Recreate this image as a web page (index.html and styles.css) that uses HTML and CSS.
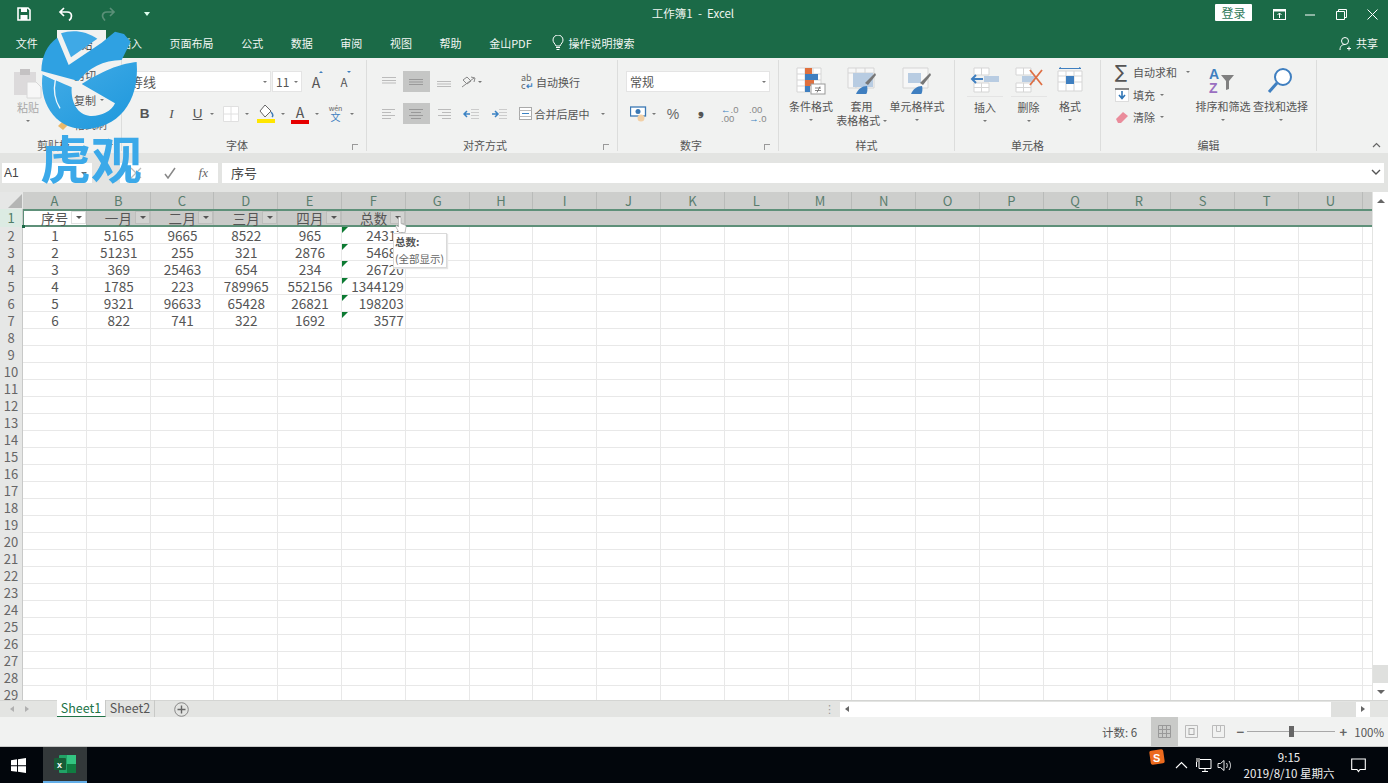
FILE: index.html
```html
<!DOCTYPE html>
<html lang="zh">
<head>
<meta charset="utf-8">
<title>工作簿1 - Excel</title>
<link rel="stylesheet" href="styles.css">
</head>
<body>
<div class="app">
  <header class="titlebar">
    <div class="qat">
      <span class="qbtn"><svg width="14" height="14" viewBox="0 0 14 14"><path d="M1 1h10l2 2v10H1z" fill="none" stroke="#fff" stroke-width="1.6"/><rect x="4" y="1" width="6" height="4" fill="#fff"/><rect x="3.5" y="8" width="7" height="5" fill="#fff"/></svg></span>
      <span class="qbtn"><svg width="16" height="14" viewBox="0 0 16 14"><path d="M6 1L2 5l4 4M2 5h7c3 0 4.500 2 4.500 4s-1 3.500-2.500 4.500" fill="none" stroke="#fff" stroke-width="1.700"/></svg></span>
      <span class="qbtn"><svg width="16" height="14" viewBox="0 0 16 14"><path d="M10 1l4 4-4 4M14 5H7C4 5 2.500 7 2.500 9S3.500 12 5 13.500" fill="none" stroke="#5b9078" stroke-width="1.700"/></svg></span>
      <span class="qbtn"><i class="tri-white"></i></span>
    </div>
    <div class="doc-title">工作簿1&nbsp; - &nbsp;Excel</div>
    <div class="winctl">
      <span class="login">登录</span>
      <span class="wbtn"><svg width="13" height="11" viewBox="0 0 13 11"><rect x=".5" y=".5" width="12" height="10" fill="none" stroke="#fff"/><rect x=".5" y=".5" width="12" height="2" fill="#fff"/><path d="M6.500 9V4M4.500 6l2-2 2 2" fill="none" stroke="#fff"/></svg></span>
      <span class="wbtn"><svg width="11" height="11" viewBox="0 0 11 11"><path d="M0 6h10" stroke="#fff"/></svg></span>
      <span class="wbtn"><svg width="11" height="11" viewBox="0 0 11 11"><path d="M.5 2.500h8v8h-8zM2.500 2.500v-2h8v8h-2" fill="none" stroke="#fff"/></svg></span>
      <span class="wbtn"><svg width="11" height="11" viewBox="0 0 11 11"><path d="M.5.500l10 10M10.500.500l-10 10" stroke="#fff"/></svg></span>
    </div>
  </header>

  <nav class="tabs">
    <span class="tab">文件</span>
    <span class="tab active">开始</span>
    <span class="tab">插入</span>
    <span class="tab">页面布局</span>
    <span class="tab">公式</span>
    <span class="tab">数据</span>
    <span class="tab">审阅</span>
    <span class="tab">视图</span>
    <span class="tab">帮助</span>
    <span class="tab">金山PDF</span>
    <span class="search"><svg width="12" height="16" viewBox="0 0 12 16"><path d="M4 11C3 8.500 1 7.500 1 5a5 5 0 0 1 10 0c0 2.500-2 3.500-3 6zM4 12.500h4M4.500 14.500h3" fill="none" stroke="#fff"/></svg>操作说明搜索</span>
    <span class="share"><svg width="14" height="15" viewBox="0 0 14 15"><circle cx="6" cy="5" r="3.500" fill="none" stroke="#fff"/><path d="M1 14c0-4 2-5.500 5-5.500M10 10.500v4M8 12.500h4" fill="none" stroke="#fff"/></svg>共享</span>
  </nav>

  <section class="ribbon">
    <div class="grp g-clip">
      <div class="body clip-body">
        <div class="paste">
          <svg width="30" height="32" viewBox="0 0 30 32"><rect x="1" y="4" width="22" height="23" fill="#dcdadb"/><rect x="7" y="1" width="10" height="6" fill="#c4c2c3"/><path d="M14 14h9l5 5v11H14z" fill="#f7f7f7" stroke="#d8d8d8"/></svg>
          <span class="dim">粘贴</span>
          <i class="dd"></i>
        </div>
        <div class="clip-stack">
          <span class="clip-item">剪切</span>
          <span class="clip-item">复制 <i class="dd"></i></span>
          <span class="clip-item brush"><svg width="13" height="12" viewBox="0 0 13 12"><path d="M1 7l5-5 5 4-5 5z" fill="#eab96a"/></svg>格式刷</span>
        </div>
      </div>
      <div class="lab"><span>剪贴板</span><i class="launch"></i></div>
    </div>

    <div class="grp g-font">
      <div class="body rows2">
        <div class="rrow font-r1">
          <span class="field fname">等线<i class="dd"></i></span>
          <span class="field fsize">11<i class="dd"></i></span>
          <span class="ico big-a">A<i class="up"></i></span>
          <span class="ico small-a">A<i class="up down"></i></span>
        </div>
        <div class="rrow font-r2">
          <b class="fmt">B</b>
          <em class="fmt it">I</em>
          <u class="fmt un">U</u><i class="dd"></i>
          <svg class="bord" width="16" height="16" viewBox="0 0 16 16"><path d="M.5.500h15v15H.5zM8 .5v15M.5 8h15" fill="#fff" stroke="#e0e0e0"/></svg><i class="dd"></i>
          <svg class="fill" width="18" height="20" viewBox="0 0 18 20"><path d="M8 1l-5 6 5 6 6-6z" fill="#fff" stroke="#666"/><path d="M14 8c2 2 2 4 1 5" stroke="#3f7cb9" fill="none" stroke-width="1.500"/><rect y="15" width="18" height="4" fill="#ffe600"/></svg><i class="dd"></i>
          <span class="colora">A</span><i class="dd"></i>
          <span class="wen"><small>wén</small>文</span><i class="dd"></i>
        </div>
      </div>
      <div class="lab"><span>字体</span><i class="launch"></i></div>
    </div>

    <div class="grp g-align">
      <div class="body rows2">
        <div class="rrow al-r">
          <span class="al"><svg width="14" height="10" viewBox="0 0 14 10"><path d="M0 .5h14M0 3.500h14M0 6h14" stroke="#bbb"/></svg></span>
          <span class="al on"><svg width="14" height="10" viewBox="0 0 14 10"><path d="M0 2.500h14M0 5h14M0 7.500h14" stroke="#999"/></svg></span>
          <span class="al"><svg width="14" height="10" viewBox="0 0 14 10"><path d="M0 4.500h14M0 7h14M0 9.500h14" stroke="#bbb"/></svg></span>
          <span class="al orient"><svg width="15" height="14" viewBox="0 0 15 14"><path d="M1 12L13 3M10 2l4 1-1 4M2 5l4-3 4 4-4 3z" fill="none" stroke="#888"/></svg><i class="dd"></i></span>
          <span class="al-text wrap"><span class="abc">ab<br>c<b>↵</b></span>自动换行</span>
        </div>
        <div class="rrow al-r">
          <span class="al"><svg width="14" height="12" viewBox="0 0 14 12"><path d="M0 1.500h13M0 4.500h9M0 7.500h13M0 10.500h9" stroke="#bbb"/></svg></span>
          <span class="al on"><svg width="14" height="12" viewBox="0 0 14 12"><path d="M0 1.500h14M2 4.500h10M0 7.500h14M2 10.500h10" stroke="#999"/></svg></span>
          <span class="al"><svg width="14" height="12" viewBox="0 0 14 12"><path d="M1 1.500h13M5 4.500h9M1 7.500h13M5 10.500h9" stroke="#bbb"/></svg></span>
          <span class="al"><svg width="16" height="12" viewBox="0 0 16 12"><path d="M8 1.500h8M8 4.500h8M8 7.500h8M8 10.500h8" stroke="#ccc"/><path d="M7 6H1M4 3L1 6l3 3" fill="none" stroke="#3b83c4" stroke-width="1.500"/></svg></span>
          <span class="al"><svg width="16" height="12" viewBox="0 0 16 12"><path d="M8 1.500h8M8 4.500h8M8 7.500h8M8 10.500h8" stroke="#ccc"/><path d="M1 6h6M4 3l3 3-3 3" fill="none" stroke="#3b83c4" stroke-width="1.500"/></svg></span>
          <span class="al-text merge"><svg width="13" height="13" viewBox="0 0 13 13"><rect x=".5" y=".5" width="12" height="12" fill="#fff" stroke="#aaa"/><path d="M.5 3.500h12M.5 9.500h12" stroke="#bbb"/><path d="M3 6.500h7" stroke="#3b83c4"/></svg>合并后居中<i class="dd dd-m"></i></span>
        </div>
      </div>
      <div class="lab"><span>对齐方式</span><i class="launch"></i></div>
    </div>

    <div class="grp g-num">
      <div class="body rows2">
        <div class="rrow"><span class="field nfmt">常规<i class="dd"></i></span></div>
        <div class="rrow num-r2">
          <svg class="cur" width="17" height="16" viewBox="0 0 17 16"><rect x=".5" y="1" width="15" height="9" fill="#fff" stroke="#3b78b4" stroke-width="1.300"/><circle cx="8" cy="5.500" r="2.500" fill="#3b78b4"/><circle cx="11" cy="12" r="3.500" fill="#f2d0a6"/></svg><i class="dd"></i>
          <span class="pct">%</span>
          <span class="comma">❟</span>
          <span class="dec"><b>←</b>.0<br>.00</span>
          <span class="dec">.00<br><b>→</b>.0</span>
        </div>
      </div>
      <div class="lab"><span>数字</span><i class="launch"></i></div>
    </div>

    <div class="grp g-style">
      <div class="body bigs">
        <div class="big w-c">
          <svg width="30" height="28" viewBox="0 0 30 28"><path d="M1 1h24v24H1zM1 7h24M1 13h24M1 19h24M9 1v24M17 1v24" fill="#fff" stroke="#d5d5d5"/><rect x="9" y="1" width="7" height="6" fill="#e0703e"/><rect x="9" y="7" width="13" height="6" fill="#3f7fc0"/><rect x="9" y="13" width="9" height="6" fill="#e0703e"/><rect x="9" y="19" width="5" height="6" fill="#3f7fc0"/><rect x="15" y="17" width="14" height="10" fill="#fff" stroke="#999"/><path d="M19 21h6M19 23.500h6M24 19.500l-3 6" stroke="#666" stroke-width=".8"/></svg>
          <span>条件格式</span><i class="dd"></i>
        </div>
        <div class="big w-t">
          <svg width="30" height="28" viewBox="0 0 30 28"><path d="M1 1h26v20H1zM1 6h26M9 1v20M18 1v20" fill="#f7f7f7" stroke="#d5d5d5"/><path d="M6 6h20v14H6z" fill="#b8cce2"/><path d="M18 16l10-10 1 2-8 10z" fill="#777"/><path d="M9 27c2-5 6-8 11-8 1 3 0 8-1 8z" fill="#3f7fc0"/></svg>
          <span>套用<br>表格格式 <i class="dd inl"></i></span>
        </div>
        <div class="big w-s">
          <svg width="30" height="28" viewBox="0 0 30 28"><path d="M1 1h25v20H1z" fill="#f7f7f7" stroke="#d5d5d5"/><rect x="6" y="6" width="13" height="10" fill="#b8cce2"/><path d="M18 16l10-10 1 2-8 10z" fill="#777"/><path d="M9 27c2-5 6-8 11-8 1 3 0 8-1 8z" fill="#3f7fc0"/></svg>
          <span>单元格样式</span><i class="dd"></i>
        </div>
      </div>
      <div class="lab solo"><span>样式</span></div>
    </div>

    <div class="grp g-cell">
      <div class="body bigs">
        <div class="big w-ins">
          <svg width="30" height="28" viewBox="0 0 30 28"><path d="M4 1h15v7H4zM11.500 1v7M4 16h15v9H4zM4 20.500h15M11.500 16v9" fill="#fff" stroke="#d5d5d5"/><rect x="14" y="9" width="15" height="6" fill="#b8cce2"/><path d="M13 12H2M6 8l-4 4 4 4" fill="none" stroke="#3f7fc0" stroke-width="2"/></svg>
          <span class="under">插入</span><i class="dd"></i>
        </div>
        <div class="big w-del">
          <svg width="30" height="28" viewBox="0 0 30 28"><path d="M2 1h15v7H2zM9.500 1v7M2 16h15v9H2zM2 20.500h15M9.500 16v9" fill="#fff" stroke="#d5d5d5"/><rect x="8" y="9" width="13" height="6" fill="#b8cce2"/><path d="M16 3l12 15M28 3L16 18" stroke="#de7045" stroke-width="1.800"/></svg>
          <span class="under">删除</span><i class="dd"></i>
        </div>
        <div class="big w-fmt">
          <svg width="26" height="28" viewBox="0 0 26 28"><path d="M1 4h24v20H1zM1 9h24M1 15h24M9 4v20M17 4v20" fill="#fff" stroke="#d5d5d5"/><path d="M2 1.500h22M2 1.500l2-1M24 1.500l-2-1" stroke="#3f7fc0"/><rect x="9" y="9" width="8" height="8" fill="#3f7fc0"/></svg>
          <span>格式</span><i class="dd"></i>
        </div>
      </div>
      <div class="lab solo"><span>单元格</span></div>
    </div>

    <div class="grp g-edit">
      <div class="body edit-body">
        <div class="edit-stack">
          <span class="ei"><span class="sig">∑</span>自动求和<i class="dd dd-a"></i></span>
          <span class="ei"><svg width="14" height="14" viewBox="0 0 14 14"><rect x=".5" y="1" width="13" height="12.500" fill="#fff" stroke="#ddd"/><path d="M0 1h14" stroke="#666" stroke-width="1.500"/><path d="M7 3v7M4 7l3 3.500L10 7" fill="none" stroke="#2f75b5" stroke-width="1.600"/></svg>填充<i class="dd"></i></span>
          <span class="ei"><svg width="14" height="14" viewBox="0 0 14 14"><path d="M1 9l7-7 5 4-7 7H3z" fill="#ea8c9b"/></svg>清除<i class="dd"></i></span>
        </div>
        <div class="big w-sort">
          <svg width="30" height="28" viewBox="0 0 30 28"><text x="1" y="12" class="az a">A</text><text x="1" y="26" class="az z">Z</text><path d="M13 8h13l-5 6v8l-3 1v-9z" fill="#808080"/></svg>
          <span>排序和筛选</span><i class="dd"></i>
        </div>
        <div class="big w-find">
          <svg width="30" height="28" viewBox="0 0 30 28"><circle cx="17" cy="10" r="8" fill="#fff" stroke="#3f7fc0" stroke-width="2"/><path d="M11 16l-8 9" stroke="#3f7fc0" stroke-width="3"/></svg>
          <span>查找和选择</span><i class="dd"></i>
        </div>
      </div>
      <div class="lab solo"><span>编辑</span></div>
    </div>
    <div class="collapse-wrap"><svg width="9" height="6" viewBox="0 0 9 6"><path d="M1 5l3.500-3.500L8 5" fill="none" stroke="#666" stroke-width="1.200"/></svg></div>
  </section>

  <section class="formula">
    <div class="namebox">A1<i class="tri"></i></div>
    <div class="fxbox">
      <svg width="12" height="12" viewBox="0 0 12 12"><path d="M1 1l10 10M11 1L1 11" stroke="#bbb" stroke-width="1.300"/></svg>
      <svg width="12" height="12" viewBox="0 0 12 12"><path d="M1 7l3 4 7-10" fill="none" stroke="#888" stroke-width="1.500"/></svg>
      <em>fx</em>
    </div>
    <div class="finput"><span>序号</span><svg width="10" height="7" viewBox="0 0 10 7"><path d="M1 1l4 4 4-4" fill="none" stroke="#555" stroke-width="1.400"/></svg></div>
  </section>

  <main class="sheet-wrap">
    <div class="sheet">
      <div class="row colhead">
        <div class="corner"><svg width="14" height="14" viewBox="0 0 14 14"><path d="M14 0v14H0z" fill="#b4b5b4"/></svg></div>
        <span>A</span><span>B</span><span>C</span><span>D</span><span>E</span><span>F</span><span>G</span><span>H</span><span>I</span><span>J</span><span>K</span><span>L</span><span>M</span><span>N</span><span>O</span><span>P</span><span>Q</span><span>R</span><span>S</span><span>T</span><span>U</span>
      </div>
      <div class="row r1">
        <div class="rh rh1">1</div>
        <div class="hc a1">序号<i class="fb"></i></div>
        <div class="hc">一月<i class="fb"></i></div>
        <div class="hc">二月<i class="fb"></i></div>
        <div class="hc">三月<i class="fb"></i></div>
        <div class="hc">四月<i class="fb"></i></div>
        <div class="hc">总数<i class="fb"></i></div>
      </div>
      <div class="row"><div class="rh">2</div><span>1</span><span>5165</span><span>9665</span><span>8522</span><span>965</span><span class="tot">24317</span></div>
      <div class="row"><div class="rh">3</div><span>2</span><span>51231</span><span>255</span><span>321</span><span>2876</span><span class="tot">54683</span></div>
      <div class="row"><div class="rh">4</div><span>3</span><span>369</span><span>25463</span><span>654</span><span>234</span><span class="tot">26720</span></div>
      <div class="row"><div class="rh">5</div><span>4</span><span>1785</span><span>223</span><span>789965</span><span>552156</span><span class="tot">1344129</span></div>
      <div class="row"><div class="rh">6</div><span>5</span><span>9321</span><span>96633</span><span>65428</span><span>26821</span><span class="tot">198203</span></div>
      <div class="row"><div class="rh">7</div><span>6</span><span>822</span><span>741</span><span>322</span><span>1692</span><span class="tot">3577</span></div>
      <div class="row"><div class="rh">8</div></div>
      <div class="row"><div class="rh">9</div></div>
      <div class="row"><div class="rh">10</div></div>
      <div class="row"><div class="rh">11</div></div>
      <div class="row"><div class="rh">12</div></div>
      <div class="row"><div class="rh">13</div></div>
      <div class="row"><div class="rh">14</div></div>
      <div class="row"><div class="rh">15</div></div>
      <div class="row"><div class="rh">16</div></div>
      <div class="row"><div class="rh">17</div></div>
      <div class="row"><div class="rh">18</div></div>
      <div class="row"><div class="rh">19</div></div>
      <div class="row"><div class="rh">20</div></div>
      <div class="row"><div class="rh">21</div></div>
      <div class="row"><div class="rh">22</div></div>
      <div class="row"><div class="rh">23</div></div>
      <div class="row"><div class="rh">24</div></div>
      <div class="row"><div class="rh">25</div></div>
      <div class="row"><div class="rh">26</div></div>
      <div class="row"><div class="rh">27</div></div>
      <div class="row"><div class="rh">28</div></div>
      <div class="row"><div class="rh">29</div></div>
      <div class="selmark"></div>
      <div class="tip"><b>总数:</b><span>(全部显示)</span></div>
      <svg class="cursor" width="12" height="18" viewBox="0 0 12 18"><path d="M4 1c1 0 2 .5 2 1.500v5l4 1.500c1 .5 1 1 1 2l-1 5.500H4L1 11c-.5-1 .5-2 1.500-1l1 1V2c0-.5 0-1 .5-1z" fill="#fff" stroke="#aaa" stroke-width=".7"/></svg>
    </div>
    <aside class="vscroll">
      <span class="va"><i class="up-t"></i></span>
      <span class="thumb"></span>
      <span class="vtrack"></span>
      <span class="va"><i class="dn-t"></i></span>
    </aside>
  </main>

  <section class="sheetbar">
    <span class="nav-a"><i class="lt"></i><i class="rt"></i></span>
    <span class="stab on">Sheet1</span>
    <span class="stab">Sheet2</span>
    <span class="addsheet"><svg width="15" height="15" viewBox="0 0 15 15"><circle cx="7.500" cy="7.500" r="6.800" fill="none" stroke="#888"/><path d="M3.500 7.500h8M7.500 3.500v8" stroke="#666" stroke-width="1.400"/></svg></span>
    <span class="split">⋮</span>
    <div class="hscroll">
      <span class="ha"><i class="lt dark"></i></span>
      <span class="hthumb"></span>
      <span class="htrack"></span>
      <span class="ha"><i class="rt dark"></i></span>
    </div>
    <span class="hgap"></span>
  </section>

  <footer class="status">
    <span class="count">计数: 6</span>
    <span class="view on"><svg width="13" height="13" viewBox="0 0 13 13"><path d="M.5.500h12v12H.5zM4.500.5v12M8.500.5v12M.5 4.500h12M.5 8.500h12" fill="none" stroke="#999"/></svg></span>
    <span class="view"><svg width="13" height="13" viewBox="0 0 13 13"><path d="M.5.500h12v12H.5z" fill="none" stroke="#bbb"/><rect x="4" y="3.500" width="5" height="6" fill="none" stroke="#aaa"/></svg></span>
    <span class="view"><svg width="13" height="13" viewBox="0 0 13 13"><path d="M.5.500h12v12H.5zM4.500.5v6h4v-6" fill="none" stroke="#bbb"/></svg></span>
    <span class="zm">−</span>
    <span class="slider"><i></i></span>
    <span class="zm zp">+</span>
    <span class="pcent">100%</span>
  </footer>

  <footer class="taskbar">
    <span class="start"><svg width="15" height="15" viewBox="0 0 15 15"><path d="M0 2.200l6-.9v5.900H0zM7 1.200L15 0v7.200H7zM0 8.200h6v5.600l-6-.9zM7 8.200h8V15l-8-1.200z" fill="#fff"/></svg></span>
    <span class="tb-excel"><svg width="22" height="20" viewBox="0 0 22 20"><rect x="5" y="1" width="17" height="18" rx="1" fill="#21a366"/><rect x="13" y="1" width="9" height="9" fill="#33c481"/><rect x="13" y="10" width="9" height="9" fill="#107c41"/><rect x="0" y="4" width="12" height="12" rx="1" fill="#185c37"/><text x="3" y="13.500" class="xl">x</text></svg></span>
    <span class="tb-fill"></span>
    <svg class="tb-up" width="13" height="8" viewBox="0 0 13 8"><path d="M1 7l5.500-5.500L12 7" fill="none" stroke="#fff" stroke-width="1.100"/></svg>
    <svg class="tb-net" width="16" height="14" viewBox="0 0 16 14"><path d="M3 1.500h12v9H3zM9 10.500v3M6 13.500h6M.5 1v8" fill="none" stroke="#fff"/><rect y="0" width="4" height="4" fill="#888"/></svg>
    <svg class="tb-vol" width="16" height="13" viewBox="0 0 16 13"><path d="M1 4.500h2.500L7 1.500v10L3.500 8.500H1zM9.500 4c1 1.500 1 3.500 0 5M12 2c2 3 2 6 0 9" fill="none" stroke="#fff" stroke-width=".9"/></svg>
    <span class="clock"><span>9:15</span><span>2019/8/10 星期六</span></span>
    <svg class="tb-note" width="15" height="15" viewBox="0 0 15 15"><path d="M.7 1h13.600v10.500H9l-1.500 2-1.500-2H.7z" fill="none" stroke="#fff" stroke-width="1.100"/></svg>
  </footer>
</div>

<div class="logo">
  <svg width="153" height="135" viewBox="0 0 459 405">
    <defs><linearGradient id="lg" x1="0" y1="0" x2="1" y2="1"><stop offset="0" stop-color="#45ade7"/><stop offset="1" stop-color="#1d97dc"/></linearGradient></defs>
    <path d="M128 222C116 300 160 385 250 387 350 388 420 310 410 186 370 190 320 205 245 252L345 310C335 335 300 350 270 348 235 345 212 310 215 262 190 250 150 235 128 222Z" fill="url(#lg)"/>
    <path d="M172 113C140 135 125 170 124 213L235 243C265 205 310 180 365 180L392 125 372 102 345 95 305 128 206 195Z" fill="#2fa1e2"/>
    <path d="M183 100L213 172 292 116C258 92 215 88 183 100Z" fill="#3fa9e6"/>
    <path d="M128 222l38 18c-6 30-2 60 14 85" fill="none" stroke="#eef6fb" stroke-width="4"/>
  </svg>
  <span class="logo-txt">虎观</span>
</div>
<svg class="sogou" width="16" height="16" viewBox="0 0 16 16"><rect x="1" y="1" width="14" height="14" rx="2" fill="#ec6a1e" transform="rotate(-8 8 8)"/><text x="4" y="12.500" class="sg">S</text></svg>
</body>
</html>
```

FILE: styles.css
```css
* { box-sizing: border-box; }
html, body { margin: 0; padding: 0; height: 783px; overflow: hidden; }
body { font-family: "Noto Sans CJK SC", "Liberation Sans", sans-serif; font-size: 11px; color: #555; background: #f1f2f1; position: relative; }
i { display: block; font-style: normal; }
svg { display: block; flex: none; }
.app { width: 1388px; height: 783px; display: flex; flex-direction: column; }

/* title bar */
.titlebar { height: 28px; background: #1b6a47; color: #fff; display: grid; grid-template-columns: 1fr auto 1fr; align-items: center; }
.qat { display: flex; padding-left: 3px; }
.qbtn { width: 42px; height: 28px; display: flex; align-items: center; justify-content: center; }
.tri-white { width: 0; height: 0; border: 3px solid transparent; border-top: 4px solid #dfe; border-bottom: 0; margin-right: 6px; }
.doc-title { font-size: 11.500px; color: #eef5f0; transform: translate(-1px, -1px); }
.winctl { display: flex; justify-content: flex-end; align-items: center; }
.login { width: 37px; height: 17px; background: #fff; color: #2f7a59; border-radius: 1px; text-align: center; line-height: 17px; font-size: 12px; margin: 0 12px 3px 0; }
.wbtn { width: 31px; height: 24px; display: flex; align-items: center; justify-content: center; }

/* tabs */
.tabs { height: 30px; background: #1b6a47; color: #f3f7f4; display: flex; align-items: stretch; padding-left: 2px; font-size: 11px; }
.tab { padding: 0 13.800px; line-height: 30px; }
.tab.active { background: #f1f2f1; color: #333; margin: 2px 0 0 5px; line-height: 28px; }
.search { display: flex; align-items: center; gap: 5px; margin-left: 6px; }
.share { margin-left: auto; display: flex; align-items: center; gap: 3px; padding-right: 10px; }

/* ribbon */
.ribbon { height: 95px; background: #f1f2f1; display: flex; }
.grp { display: flex; flex-direction: column; margin: 2px 0; border-right: 1px solid #dcdddc; flex: none; }
.g-clip { width: 122px; }
.g-font { width: 245px; }
.g-align { width: 251px; }
.g-num { width: 161px; }
.g-style { width: 176px; }
.g-cell { width: 146px; }
.g-edit { width: 216px; }
.body { height: 77px; display: flex; flex: none; }
.lab { height: 14px; display: grid; grid-template-columns: 1fr 14px; align-items: center; text-align: center; font-size: 11px; color: #555; line-height: 14px; padding-top: 1px; box-sizing: content-box; margin-bottom: -1px; }
.lab.solo { grid-template-columns: 1fr; }
.launch { width: 6px; height: 6px; border-left: 1px solid #999; border-top: 1px solid #999; margin-top: 3px; }
.dd { width: 0; height: 0; border: 2px solid transparent; border-top: 2px solid #777; border-bottom: 0; flex: none; }
.dim { color: #a8a8a8; }
.clip-body { padding-top: 8px; }
.paste { width: 56px; display: flex; flex-direction: column; align-items: center; flex: none; }
.paste .dim { margin-top: -1px; line-height: 16px; }
.paste .dd { margin-top: 5px; }
.clip-stack { display: flex; flex-direction: column; gap: 9.500px; padding: 0 0 0 18px; }
.clip-item { display: flex; align-items: center; gap: 4px; line-height: 15px; white-space: nowrap; }
.brush { margin-left: -17px; }
.rows2 { flex-direction: column; padding-top: 11px; gap: 11px; }
.rrow { height: 21px; display: flex; align-items: center; flex: none; }
.field { background: #fff; border: 1px solid #e4e4e4; height: 21px; display: flex; align-items: center; justify-content: space-between; padding: 0 3px; font-size: 12px; }
.font-r1 { padding-left: 1px; }
.fname { width: 148px; padding-left: 6px; font-size: 13px; }
.fsize { width: 30px; margin-left: 1px; }
.ico { position: relative; font-size: 13px; color: #555; width: 14px; text-align: center; line-height: 16px; display: block; }
.big-a { margin-left: 7px; font-size: 14px; }
.small-a { margin-left: 14px; font-size: 11.500px; }
.up { position: absolute; right: 0; top: -3px; width: 0; height: 0; border: 2px solid transparent; border-bottom: 2px solid #3f7fc0; border-top: 0; }
.up.down { border-bottom: 0; border-top: 2px solid #3f7fc0; }
.font-r2 { padding-left: 16px; }
.fmt { font-size: 13.500px; width: 13px; text-align: center; color: #555; line-height: 16px; font-family: "Liberation Sans", sans-serif; }
.it { margin-left: 14px; font-family: "Liberation Serif", serif; }
.un { margin-left: 13px; text-decoration: underline; }
.font-r2 .dd { margin-left: 6px; }
.bord { margin-left: 9px; }
.fill { margin-left: 8px; }
.colora { width: 18px; height: 20px; margin-left: 6px; border-bottom: 4px solid #e60000; text-align: center; font-size: 14px; line-height: 16px; color: #555; }
.wen { margin-left: 8px; width: 17px; display: flex; flex-direction: column; align-items: center; color: #3f7fc0; font-size: 10px; line-height: 10px; }
.wen small { font-size: 7px; line-height: 7px; color: #666; }

.al-r { padding-left: 8px; }
.al { width: 27.500px; height: 21px; display: flex; align-items: center; justify-content: center; flex: none; }
.al.on { background: #c5c6c5; }
.orient { gap: 2px; }
.al-text { display: flex; align-items: center; gap: 3px; font-size: 11px; white-space: nowrap; }
.wrap { margin-left: 36px; }
.abc { font-size: 9px; line-height: 8px; color: #666; display: block; width: 12px; }
.abc b { color: #3f7fc0; font-weight: 700; }
.merge { margin-left: 6px; }
.dd-m { margin-left: 8px; }

.g-num .rows2 { padding-left: 8px; }
.nfmt { width: 144px; }
.num-r2 { padding-left: 4px; }
.num-r2 .dd { margin-left: 5px; }
.pct { margin-left: 10px; width: 14px; font-size: 14px; color: #666; font-family: "Liberation Sans", sans-serif; text-align: center; }
.comma { margin-left: 14px; width: 14px; color: #555; font-size: 15px; text-align: center; font-weight: 700; font-family: "DejaVu Sans", sans-serif; padding-bottom: 7px; }
.dec { margin-left: 13px; width: 15px; font-size: 9.500px; line-height: 9px; color: #888; font-family: "Liberation Sans", sans-serif; white-space: nowrap; }
.dec b { color: #3f7fc0; }

.bigs { padding-top: 7px; }
.big { display: flex; flex-direction: column; align-items: center; flex: none; font-size: 11px; line-height: 14px; text-align: center; white-space: nowrap; }
.big svg { height: 28px; margin-bottom: 4px; }
.big .dd { margin-top: 6px; }
.big .inl { display: inline-block; margin: 0 0 2px 0; vertical-align: middle; }
.w-c { width: 56px; margin-left: 4px; }
.w-t { width: 45px; }
.w-s { width: 66px; }
.w-ins { width: 38px; margin-left: 11px; }
.w-del { width: 45px; margin-left: 2px; }
.w-fmt { width: 38px; }
.under { border-top: 1px solid #e4e4e4; padding-top: 3px; margin-top: -3px; width: 36px; }
.edit-body { padding-top: 4px; }
.edit-stack { width: 93px; padding-left: 14px; display: flex; flex-direction: column; gap: 6.500px; flex: none; }
.ei { display: flex; align-items: center; gap: 4px; height: 16px; white-space: nowrap; font-size: 11px; }
.ei .dd { margin-left: 1px; }
.ei .dd-a { margin-left: 5px; }
.sig { font-size: 18px; line-height: 16px; color: #555; width: 14px; font-family: "DejaVu Sans", sans-serif; }
.w-sort { width: 58px; padding-top: 3px; }
.w-find { width: 57px; padding-top: 3px; }
.az { font: 700 14px "Liberation Sans", sans-serif; }
.az.a { fill: #3f7fc0; }
.az.z { fill: #9a6fc0; }
.collapse-wrap { flex: 1; display: flex; align-items: flex-end; justify-content: flex-end; padding: 0 7px 5px 0; }

/* formula */
.formula { height: 39px; background: #e3e4e2; padding: 10px 4px 9px 2px; display: flex; }
.namebox { width: 90px; background: #fff; display: flex; align-items: center; justify-content: space-between; padding: 0 5px 0 2px; font-size: 12px; color: #444; font-family: "Liberation Sans", sans-serif; }
.tri { width: 0; height: 0; border: 3px solid transparent; border-top: 3px solid #666; border-bottom: 0; }
.fxbox { width: 98px; margin-left: 28px; background: #fff; display: flex; align-items: center; justify-content: space-between; padding: 0 10px; }
.fxbox em { font-family: "Liberation Serif", serif; font-size: 13px; color: #666; }
.finput { flex: 1; margin-left: 4px; background: #fff; display: flex; align-items: center; justify-content: space-between; padding: 0 3px 2px 9px; font-size: 13px; color: #444; }

/* sheet */
.sheet-wrap { height: 508px; display: flex; background: #fff; }
.sheet { width: 1372px; height: 508px; overflow: hidden; position: relative; font-size: 13.500px; color: #555; line-height: 17px; }
.row { height: 17px; width: 1372px; display: grid; grid-template-columns: 23px repeat(21, 63.800px); border-bottom: 1px solid #e8e8e8; background: repeating-linear-gradient(90deg, #fff 0 62.800px, #e8e8e8 62.800px 63.800px) 23px 0; text-align: center; line-height: 17px; }
.rh { background: #e6e7e6; border-right: 1px solid #c8c9c8; color: #666; font-size: 13px; text-align: center; line-height: 17px; }
.colhead { background: #cdcecc; color: #5a7d6e; font-size: 13px; border-bottom: 0; }
.colhead > span { border-right: 1px solid #b9bbb9; }
.corner { background: #e6e7e6; display: flex; justify-content: flex-end; align-items: flex-end; padding: 0 1px 1px 0; }
.r1 { height: 18px; background: #c9cac8; border-top: 2px solid #5e9079; border-bottom: 2px solid #5e9079; line-height: 15px; grid-template-rows: 14px; }
.rh1 { background: #dcebe3; color: #4f7d68; margin: -2px 0; height: 18px; line-height: 18px; }
.hc { position: relative; text-align: left; padding-left: 18px; font-size: 13.500px; letter-spacing: .3px; border-right: 1px solid #bcbebc; display: flex; justify-content: space-between; height: 14px; line-height: 15px; }
.hc.a1 { background: #fff; box-shadow: inset 1px 0 #5e9079; }
.fb { width: 15px; height: 13px; background: #d2d3d1; border: 1px solid #bdbebc; position: relative; }
.a1 .fb { background: #fff; border-color: #e0e0e0; }
.fb::after { content: ""; position: absolute; left: 4px; top: 4px; border: 3px solid transparent; border-top: 3px solid #555; border-bottom: 0; }
.tot { text-align: right; padding-right: 2px; position: relative; }
.tot::before { content: ""; position: absolute; left: 0; top: 0; border: 3px solid transparent; border-top: 3px solid #0c7a32; border-left: 3px solid #0c7a32; }
.selmark { position: absolute; left: 22px; top: 33px; width: 3px; height: 3px; background: #1b6a47; }
.cursor { position: absolute; left: 395px; top: 24px; }
.tip { position: absolute; left: 393px; top: 41px; width: 54px; height: 35px; background: #fff; border: 1px solid #dadada; box-shadow: 1px 1px 1px #e6e6e6; font-size: 10.500px; padding: 0 0 0 1px; display: flex; flex-direction: column; color: #666; white-space: nowrap; line-height: 17px; }
.tip b { color: #555; line-height: 16px; }

.vscroll { width: 16px; background: #e3e4e2; display: flex; flex-direction: column; padding-left: 1px; }
.va { height: 17px; display: flex; align-items: center; justify-content: center; background: #fff; flex: none; }
.up-t { border: 4px solid transparent; border-bottom: 4px solid #666; border-top: 0; }
.dn-t { border: 4px solid transparent; border-top: 4px solid #666; border-bottom: 0; }
.thumb { height: 456px; background: #fff; flex: none; }
.vtrack { flex: 1; background: #dfe0de; }

/* sheet tabs */
.sheetbar { height: 17px; background: #e3e4e2; border-top: 1px solid #d4d5d3; display: flex; align-items: center; }
.nav-a { width: 57px; display: flex; gap: 11px; padding-left: 10px; flex: none; }
.lt { border: 3px solid transparent; border-right: 4px solid #b0b0b0; border-left: 0; }
.rt { border: 3px solid transparent; border-left: 4px solid #b0b0b0; border-right: 0; }
.lt.dark { border-right-color: #666; }
.rt.dark { border-left-color: #666; }
.stab { width: 49px; height: 17px; text-align: center; font-size: 12.500px; line-height: 15px; color: #555; border-right: 1px solid #c8c9c7; flex: none; margin-top: -1px; }
.stab.on { background: #fff; color: #217346; border-bottom: 1px solid #217346; }
.addsheet { margin-left: 19px; flex: none; }
.split { margin-left: 634px; width: 13px; color: #999; font-size: 11px; flex: none; text-align: center; font-family: "DejaVu Sans", sans-serif; line-height: 15px; }
.hscroll { margin-left: 4px; width: 530px; height: 15px; display: flex; background: #dfe0de; flex: none; }
.ha { width: 14px; background: #fff; display: flex; align-items: center; justify-content: center; flex: none; }
.hthumb { width: 477px; background: #fff; flex: none; }
.htrack { flex: 1; }
.hgap { flex: 1; }

/* status */
.status { height: 30px; background: #f1f2f1; display: flex; align-items: center; justify-content: flex-end; padding-right: 4px; font-size: 11.500px; color: #555; border-bottom: 1px solid #c9cac9; }
.count { margin-right: 14px; }
.view { width: 27px; height: 29px; display: flex; align-items: center; justify-content: center; flex: none; }
.view.on { background: #c9cac8; }
.zm { margin-left: 4px; width: 8px; text-align: center; font-size: 13px; font-weight: 700; color: #666; line-height: 14px; }
.zp { margin-left: 4px; }
.slider { margin-left: 3px; width: 88px; height: 1px; background: #a8a8a8; position: relative; display: block; }
.slider i { position: absolute; left: 42px; top: -5px; width: 5px; height: 11px; background: #666; }
.pcent { margin-left: 7px; font-size: 11.500px; }

/* task bar */
.taskbar { height: 36px; background: #02060c; display: flex; align-items: center; color: #fff; }
.start { width: 37px; display: flex; justify-content: center; flex: none; }
.tb-excel { width: 44px; height: 36px; background: #33383a; border-bottom: 2px solid #63aee8; display: flex; align-items: center; justify-content: center; flex: none; margin-left: 6px; }
.tb-fill { flex: 1; }
.tb-up { margin-right: 8px; }
.tb-net { margin-right: 5px; }
.tb-vol { margin-right: 1px; }
.clock { width: 110px; display: flex; flex-direction: column; align-items: center; font-size: 11.500px; line-height: 16px; color: #f0f0f0; }
.tb-note { margin: 0 22px 0 7px; }
.xl { font: 700 9px "Liberation Sans", sans-serif; fill: #fff; }
.sg { font: 700 11px "Liberation Sans", sans-serif; fill: #fff; }

/* overlays */
.logo { position: absolute; left: 0; top: 0; width: 153px; height: 190px; }
.logo-txt { position: absolute; left: 40px; top: 123px; font-size: 51px; font-weight: 700; line-height: 68px; color: #3ba9e9; white-space: nowrap; }
.sogou { position: absolute; left: 1149px; top: 749px; }
```
